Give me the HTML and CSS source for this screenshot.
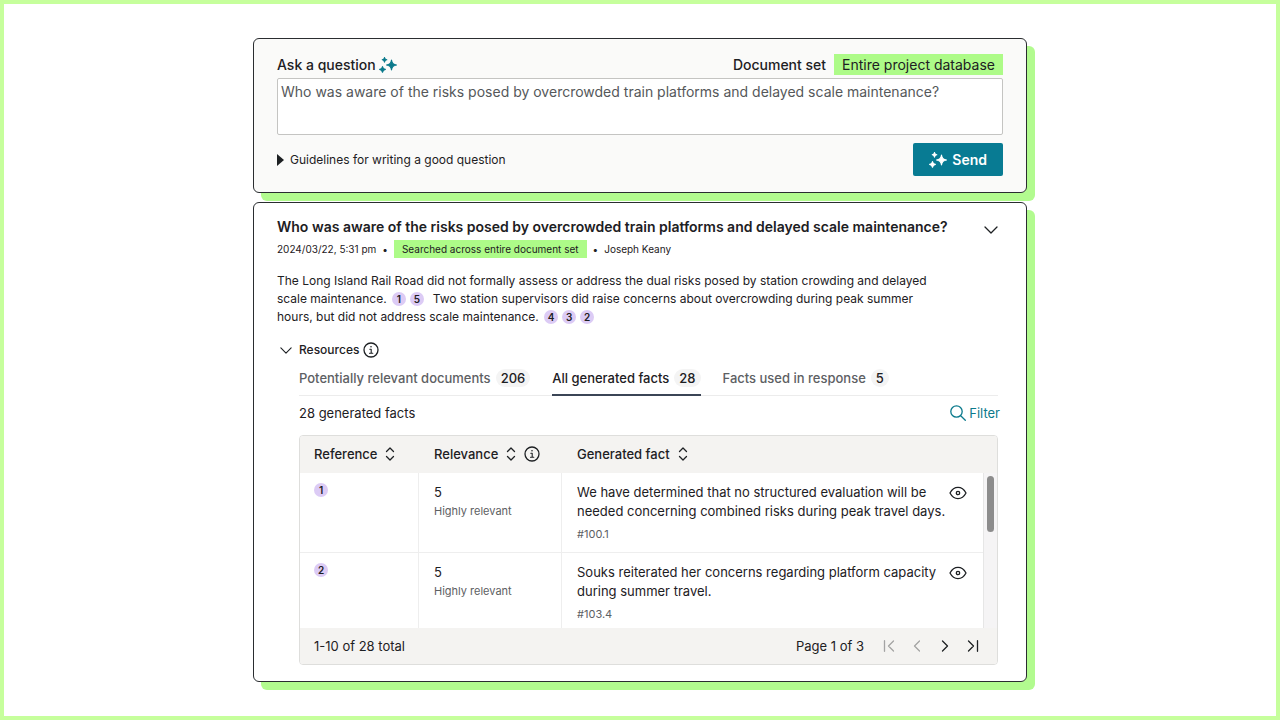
FILE: index.html
```html
<!DOCTYPE html>
<html lang="en">
<head>
<meta charset="utf-8">
<meta name="viewport" content="width=device-width, initial-scale=1">
<title>Ask a question</title>
<link rel="stylesheet" href="styles.css">
</head>
<body>
<svg class="sprite" aria-hidden="true">
  <symbol id="sparkles" viewBox="0 0 18 16">
    <path d="M12.500 3 Q13 7.500 17.500 8 Q13 8.500 12.500 13 Q12 8.500 7.500 8 Q12 7.500 12.500 3Z M5.500 .5 Q5.800 2.500 7.800 2.800 Q5.800 3.100 5.500 5.100 Q5.200 3.100 3.200 2.800 Q5.200 2.500 5.500 .5Z M3.500 9.500 Q3.900 12 6.400 12.400 Q3.900 12.800 3.500 15.300 Q3.100 12.800 .6 12.400 Q3.100 12 3.500 9.500Z" fill="currentColor" stroke="currentColor" stroke-width="1.1" stroke-linejoin="round"/>
  </symbol>
  <symbol id="down" viewBox="0 0 14 8"><path d="M1 1l6 6 6-6" class="stroke"/></symbol>
  <symbol id="info" viewBox="0 0 16 16"><circle cx="8" cy="8" r="7" class="stroke"/><path d="M6.800 7.200h1.400v4M6.500 11.300h3.300" class="stroke thin"/><circle cx="8" cy="4.800" r=".8" fill="currentColor"/></symbol>
  <symbol id="sort" viewBox="0 0 10 14"><path d="M1.500 4.500l3.500-3.500 3.500 3.500M1.500 9.500l3.500 3.500 3.500-3.500" class="stroke"/></symbol>
  <symbol id="search" viewBox="0 0 16 16"><circle cx="6.500" cy="6.500" r="5.700" class="stroke"/><path d="M10.700 10.700l4.600 4.600" class="stroke"/></symbol>
  <symbol id="eye" viewBox="0 0 18 14"><path d="M1 7C5-.5 13-.5 17 7C13 14.500 5 14.500 1 7Z" class="stroke"/><circle cx="9" cy="7" r="1.700" class="stroke"/></symbol>
  <symbol id="first" viewBox="0 0 12 12"><path d="M1.500 .7v10.600M10.500 1l-5 5 5 5" class="stroke"/></symbol>
  <symbol id="prev" viewBox="0 0 12 12"><path d="M8.500 1l-5 5 5 5" class="stroke"/></symbol>
  <symbol id="next" viewBox="0 0 12 12"><path d="M3.500 1l5 5-5 5" class="stroke"/></symbol>
  <symbol id="last" viewBox="0 0 12 12"><path d="M1.500 1l5 5-5 5M10.500 .7v10.600" class="stroke"/></symbol>
</svg>
<main class="page">
  <form class="card ask">
    <div class="ask-head">
      <label class="ask-label" for="question">Ask a question <svg class="i-spark teal"><use href="#sparkles"/></svg></label>
      <div class="docset"><span>Document set</span><span class="mark docset-value">Entire project database</span></div>
    </div>
    <textarea class="question" id="question" rows="2">Who was aware of the risks posed by overcrowded train platforms and delayed scale maintenance?</textarea>
    <div class="ask-foot">
      <button type="button" class="plain guide"><svg class="i-tri" viewBox="0 0 7 12"><path d="M0 0l7 6-7 6z" fill="currentColor"/></svg>Guidelines for writing a good question</button>
      <button type="button" class="send"><svg class="i-spark"><use href="#sparkles"/></svg>Send</button>
    </div>
  </form>

  <section class="card answer">
    <header class="answer-head">
      <div>
        <h1 class="title">Who was aware of the risks posed by overcrowded train platforms and delayed scale maintenance?</h1>
        <p class="meta"><span>2024/03/22, 5:31 pm</span><span>•</span><span class="mark meta-mark">Searched across entire document set</span><span>•</span><span>Joseph Keany</span></p>
      </div>
      <button type="button" class="plain" aria-label="Collapse answer"><svg class="i-down"><use href="#down"/></svg></button>
    </header>
    <p class="body">The Long Island Rail Road did not formally assess or address the dual risks posed by station crowding and delayed<br>scale maintenance. <a class="ref" href="#r1">1</a><a class="ref" href="#r5">5</a>&nbsp; Two station supervisors did raise concerns about overcrowding during peak summer<br>hours, but did not address scale maintenance. <a class="ref" href="#r4">4</a><a class="ref" href="#r3">3</a><a class="ref" href="#r2">2</a></p>

    <div class="res-head">
      <button type="button" class="plain res-toggle"><svg class="i-down-s"><use href="#down"/></svg>Resources</button>
      <button type="button" class="plain" aria-label="About resources"><svg class="i-info"><use href="#info"/></svg></button>
    </div>
    <div class="resources">
      <div class="tabs" role="tablist">
        <button type="button" role="tab" class="tab">Potentially relevant documents<span class="count">206</span></button>
        <button type="button" role="tab" class="tab tab-on" aria-selected="true">All generated facts<span class="count">28</span></button>
        <button type="button" role="tab" class="tab">Facts used in response<span class="count">5</span></button>
      </div>
      <div class="bar"><span>28 generated facts</span><button type="button" class="plain filter"><svg class="i-search"><use href="#search"/></svg>Filter</button></div>
      <div class="grid">
        <div class="scroll">
          <table class="facts">
            <colgroup><col class="c-ref"><col class="c-rel"><col></colgroup>
            <thead><tr>
              <th><span class="th">Reference<svg class="i-sort"><use href="#sort"/></svg></span></th>
              <th><span class="th">Relevance<svg class="i-sort"><use href="#sort"/></svg><svg class="i-info"><use href="#info"/></svg></span></th>
              <th><span class="th">Generated fact<svg class="i-sort"><use href="#sort"/></svg></span></th>
            </tr></thead>
            <tbody>
              <tr>
                <td><a class="ref ref-row" id="r1" href="#r1">1</a></td>
                <td><p>5</p><p class="sub">Highly relevant</p></td>
                <td><div class="fact"><div><p>We have determined that no structured evaluation will be<br>needed concerning combined risks during peak travel days.</p><p class="num">#100.1</p></div><button type="button" class="plain view" aria-label="View fact"><svg class="i-eye"><use href="#eye"/></svg></button></div></td>
              </tr>
              <tr>
                <td><a class="ref ref-row" id="r2" href="#r2">2</a></td>
                <td><p>5</p><p class="sub">Highly relevant</p></td>
                <td><div class="fact"><div><p>Souks reiterated her concerns regarding platform capacity<br>during summer travel.</p><p class="num">#103.4</p></div><button type="button" class="plain view" aria-label="View fact"><svg class="i-eye"><use href="#eye"/></svg></button></div></td>
              </tr>
            </tbody>
          </table>
          <div class="track"><div class="thumb"></div></div>
        </div>
        <footer class="pager">
          <span>1-10 of 28 total</span>
          <div class="pager-nav"><span>Page 1 of 3</span>
            <div class="pager-buttons">
              <button type="button" class="plain" disabled aria-label="First page"><svg class="i-page"><use href="#first"/></svg></button>
              <button type="button" class="plain" disabled aria-label="Previous page"><svg class="i-page"><use href="#prev"/></svg></button>
              <button type="button" class="plain" aria-label="Next page"><svg class="i-page"><use href="#next"/></svg></button>
              <button type="button" class="plain" aria-label="Last page"><svg class="i-page"><use href="#last"/></svg></button>
            </div>
          </div>
        </footer>
      </div>
    </div>
  </section>
</main>
</body>
</html>
```
FILE: styles.css
```css
* { box-sizing: border-box; }
body {
  margin: 0;
  background: #fff;
  color: #1d2023;
  font: 13px/18px Inter, "Liberation Sans", sans-serif;
}
h1, p { margin: 0; }
svg { display: block; flex: none; }
button { font: inherit; color: inherit; cursor: pointer; }
.sprite { position: absolute; width: 0; height: 0; }
.stroke { fill: none; stroke: currentColor; stroke-width: 1.3; stroke-linecap: round; stroke-linejoin: round; }
.thin { stroke-width: 1.1; }
.plain { display: flex; align-items: center; border: 0; padding: 0; background: none; }
.teal { color: #0b7a8c; }

.page {
  min-height: 100vh;
  border: 4px solid #c6ff9c;
  padding: 34px 16px 32px;
}
.card {
  max-width: 774px;
  margin: 0 auto;
  border: 1px solid #2a2d30;
  border-radius: 6px;
  box-shadow: 8px 8px 0 #b2fb8f;
}
.mark { background: #adfb88; }

.ask { padding: 15px 23px 16px; background: #fafaf9; }
.ask-head { display: flex; justify-content: space-between; align-items: center; margin-bottom: 3px; font-size: 14px; font-weight: 500; line-height: 21px; }
.ask-label { display: flex; align-items: center; gap: 3px; }
.docset { display: flex; gap: 8px; }
.docset-value { padding: 0 8px; font-weight: 400; }
.question {
  display: block;
  width: 100%;
  height: 57px;
  padding: 3px;
  border: 1px solid #c4c4c2;
  border-radius: 2px;
  background: #fff;
  color: #55585a;
  font: 14px/20px Inter, "Liberation Sans", sans-serif;
  resize: none;
}
.ask-foot { display: flex; justify-content: space-between; align-items: center; margin-top: 8px; }
.guide { gap: 6px; font-size: 12px; }
.send {
  display: flex;
  align-items: center;
  gap: 5px;
  height: 33px;
  padding: 0 16px;
  border: 0;
  border-radius: 2px;
  background: #087b93;
  color: #fff;
  font-size: 14px;
  font-weight: 600;
}

.answer { margin-top: 9px; padding: 14px 23px 16px; background: #fff; }
.answer-head { display: flex; justify-content: space-between; align-items: flex-start; padding-right: 5px; }
.answer-head .plain { margin-top: 9px; }
.title { font-size: 14px; font-weight: 600; line-height: 20px; }
.meta { display: flex; gap: 6px; margin-top: 3px; font-size: 10px; line-height: 18px; }
.meta-mark { padding: 0 8px; }
.body { margin-top: 14px; font-size: 12px; }
.ref {
  display: inline-block;
  width: 14px;
  height: 14px;
  margin: 0 2px;
  border-radius: 7px;
  background: #dccbf5;
  color: #1d2023;
  font-size: 10px;
  font-weight: 600;
  line-height: 14px;
  text-align: center;
  text-decoration: none;
}
.res-head { display: flex; align-items: center; gap: 4px; margin-top: 15px; padding-left: 3px; font-size: 12px; font-weight: 500; }
.res-toggle { gap: 7px; }
.resources { padding: 0 5px 0 22px; }

.tabs { display: flex; gap: 22px; margin-top: 9px; border-bottom: 1px solid #ececec; }
.tab {
  display: flex;
  align-items: center;
  gap: 5px;
  height: 28px;
  padding: 0 0 7px;
  margin-bottom: -1px;
  border: 0;
  border-bottom: 2px solid transparent;
  background: none;
  color: #5d6063;
  font-weight: 500;
}
.tab-on { color: #1d2023; border-color: #3b4556; }
.count { padding: 0 5px; border-radius: 9px; background: #f4f4f4; color: #1d2023; }
.bar { display: flex; justify-content: space-between; align-items: center; margin: 8px -2px 13px 0; }
.filter { gap: 3px; color: #0b7a8c; }

.grid { border: 1px solid #dededc; border-radius: 4px; overflow: hidden; }
.scroll { position: relative; }
.facts { width: 100%; border-collapse: separate; border-spacing: 0; table-layout: fixed; }
.c-ref { width: 119px; }
.c-rel { width: 143px; }
th { height: 37px; padding: 0 15px 2px; background: #f4f3f1; text-align: left; font-weight: 500; }
th:first-child, td:first-child { padding-left: 14px; }
.th { display: flex; align-items: center; gap: 8px; }
td { padding: 10px 15px 9px; border-right: 1px solid #eee; border-bottom: 1px solid #eee; vertical-align: top; line-height: 19px; }
td:last-child { border-right: 0; padding-right: 30px; }
tr:last-child td { border-bottom: 0; padding-bottom: 5px; }
.ref-row { display: block; margin: 0; }
.sub, .num { font-size: 11px; color: #5d6063; }
.num { margin-top: 4px; line-height: 18px; }
.fact { display: flex; justify-content: space-between; white-space: nowrap; }
.view { height: 19px; }
.track { position: absolute; top: 37px; right: 0; bottom: 0; width: 14px; padding: 3px; border-left: 1px solid #e6e6e6; background: #f5f4f5; }
.thumb { height: 56px; border-radius: 4px; background: #8c8c8c; }
.pager { display: flex; justify-content: space-between; align-items: center; height: 36px; padding: 0 18px 0 14px; background: #f4f3f1; }
.pager-nav { display: flex; align-items: center; gap: 19px; }
.pager-buttons { display: flex; gap: 16px; }
.pager-buttons .plain:disabled { color: #a3a3a3; }

.i-spark { width: 18px; height: 16px; }
.i-tri { width: 7px; height: 12px; }
.i-down { width: 14px; height: 8px; }
.i-down-s { width: 12px; height: 7px; }
.i-info { width: 16px; height: 16px; }
.i-sort { width: 10px; height: 14px; }
.i-search { width: 16px; height: 16px; }
.i-eye { width: 18px; height: 14px; }
.i-page { width: 12px; height: 12px; }
```
